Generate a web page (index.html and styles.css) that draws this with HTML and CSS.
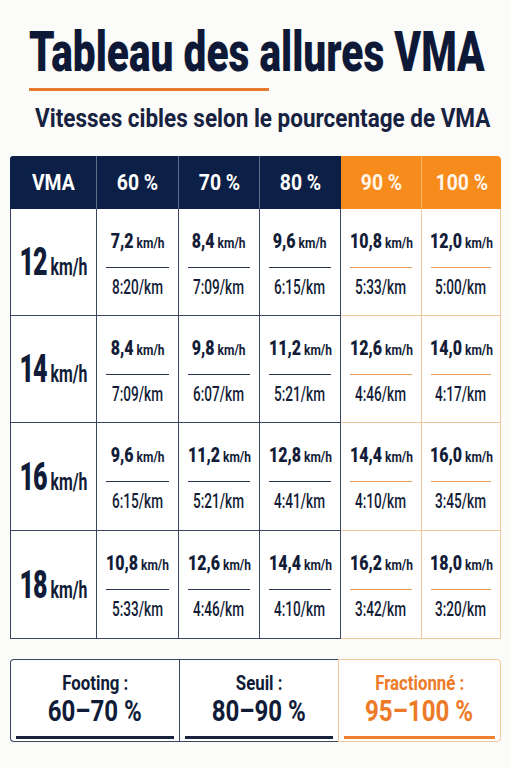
FILE: index.html
```html
<!DOCTYPE html>
<html lang="fr">
<head>
<meta charset="utf-8">
<link rel="stylesheet" href="styles.css">
</head>
<body>
<div class="page">
  <h1 class="title"><span class="sq-l">Tableau des allures VMA</span></h1>
  <div class="rule"></div>
  <p class="subtitle"><span class="sq-l sub">Vitesses cibles selon le pourcentage de VMA</span></p>

  <div class="table">
    <div class="th navy first"><span class="sq">VMA</span></div>
    <div class="th navy"><span class="sq">60 %</span></div>
    <div class="th navy"><span class="sq">70 %</span></div>
    <div class="th navy"><span class="sq">80 %</span></div>
    <div class="th orange"><span class="sq">90 %</span></div>
    <div class="th orange last"><span class="sq">100 %</span></div>

    <div class="rowh"><span class="sq rh"><b>12</b> km/h</span></div>
    <div class="cell n"><div class="sp"><span class="sq"><b>7,2</b> km/h</span></div><div class="pc"><span class="sq">8:20/km</span></div></div>
    <div class="cell n"><div class="sp"><span class="sq"><b>8,4</b> km/h</span></div><div class="pc"><span class="sq">7:09/km</span></div></div>
    <div class="cell n"><div class="sp"><span class="sq"><b>9,6</b> km/h</span></div><div class="pc"><span class="sq">6:15/km</span></div></div>
    <div class="cell o"><div class="sp"><span class="sq"><b>10,8</b> km/h</span></div><div class="pc"><span class="sq">5:33/km</span></div></div>
    <div class="cell o"><div class="sp"><span class="sq"><b>12,0</b> km/h</span></div><div class="pc"><span class="sq">5:00/km</span></div></div>

    <div class="rowh"><span class="sq rh"><b>14</b> km/h</span></div>
    <div class="cell n"><div class="sp"><span class="sq"><b>8,4</b> km/h</span></div><div class="pc"><span class="sq">7:09/km</span></div></div>
    <div class="cell n"><div class="sp"><span class="sq"><b>9,8</b> km/h</span></div><div class="pc"><span class="sq">6:07/km</span></div></div>
    <div class="cell n"><div class="sp"><span class="sq"><b>11,2</b> km/h</span></div><div class="pc"><span class="sq">5:21/km</span></div></div>
    <div class="cell o"><div class="sp"><span class="sq"><b>12,6</b> km/h</span></div><div class="pc"><span class="sq">4:46/km</span></div></div>
    <div class="cell o"><div class="sp"><span class="sq"><b>14,0</b> km/h</span></div><div class="pc"><span class="sq">4:17/km</span></div></div>

    <div class="rowh"><span class="sq rh"><b>16</b> km/h</span></div>
    <div class="cell n"><div class="sp"><span class="sq"><b>9,6</b> km/h</span></div><div class="pc"><span class="sq">6:15/km</span></div></div>
    <div class="cell n"><div class="sp"><span class="sq"><b>11,2</b> km/h</span></div><div class="pc"><span class="sq">5:21/km</span></div></div>
    <div class="cell n"><div class="sp"><span class="sq"><b>12,8</b> km/h</span></div><div class="pc"><span class="sq">4:41/km</span></div></div>
    <div class="cell o"><div class="sp"><span class="sq"><b>14,4</b> km/h</span></div><div class="pc"><span class="sq">4:10/km</span></div></div>
    <div class="cell o"><div class="sp"><span class="sq"><b>16,0</b> km/h</span></div><div class="pc"><span class="sq">3:45/km</span></div></div>

    <div class="rowh"><span class="sq rh"><b>18</b> km/h</span></div>
    <div class="cell n"><div class="sp"><span class="sq"><b>10,8</b> km/h</span></div><div class="pc"><span class="sq">5:33/km</span></div></div>
    <div class="cell n"><div class="sp"><span class="sq"><b>12,6</b> km/h</span></div><div class="pc"><span class="sq">4:46/km</span></div></div>
    <div class="cell n"><div class="sp"><span class="sq"><b>14,4</b> km/h</span></div><div class="pc"><span class="sq">4:10/km</span></div></div>
    <div class="cell o"><div class="sp"><span class="sq"><b>16,2</b> km/h</span></div><div class="pc"><span class="sq">3:42/km</span></div></div>
    <div class="cell o"><div class="sp"><span class="sq"><b>18,0</b> km/h</span></div><div class="pc"><span class="sq">3:20/km</span></div></div>
  </div>

  <div class="legend">
    <div class="lg navy-lg">
      <div class="lg-name"><span class="sq">Footing :</span></div>
      <div class="lg-val"><span class="sq">60–70 %</span></div>
    </div>
    <div class="lg navy-lg mid">
      <div class="lg-name"><span class="sq">Seuil :</span></div>
      <div class="lg-val"><span class="sq">80–90 %</span></div>
    </div>
    <div class="lg orange-lg">
      <div class="lg-name"><span class="sq">Fractionné :</span></div>
      <div class="lg-val"><span class="sq">95–100 %</span></div>
    </div>
  </div>
</div>
</body>
</html>
```

FILE: styles.css
```css
* { box-sizing: border-box; }
html, body { margin: 0; padding: 0; }
body {
  background: #fbfbfa;
  font-family: Roboto, "Liberation Sans", sans-serif;
  color: #111c38;
  width: 511px;
  height: 768px;
  overflow: hidden;
}
.page {
  padding: 0 10px;
  overflow: hidden;
}
.sq {
  display: inline-block;
  transform: scaleX(0.72);
  transform-origin: center;
  white-space: nowrap;
  flex: none;
}
.sq-l {
  display: inline-block;
  transform: scaleX(0.725);
  transform-origin: left center;
  white-space: nowrap;
}
.title {
  margin: 0;
  padding-top: 24px;
  padding-left: 19px;
  font-size: 56px;
  line-height: 56px;
  font-weight: 900;
  color: #0d1936;
  white-space: nowrap;
}
.rule {
  margin: 8px 0 0 19px;
  width: 240px;
  height: 3px;
  background: #e87a2e;
}
.subtitle {
  margin: 12px 0 0 25px;
  font-size: 26px;
  line-height: 30px;
  font-weight: 700;
  color: #17223f;
  white-space: nowrap;
  overflow: hidden;
}
.sub { transform: scaleX(0.865); }
.table {
  margin-top: 23px;
  display: grid;
  grid-template-columns: 87px 82px 81px 81px 81px 79px;
  grid-template-rows: 53px 107px 107px 108px 108px;
}
.th {
  display: flex;
  align-items: center;
  justify-content: center;
  font-size: 22px;
  font-weight: 700;
  color: #ffffff;
  border-right: 1px solid rgba(255,255,255,0.35);
}
.th .sq { transform: scaleX(0.88); }
.th.navy { background: #0c1f46; }
.th.orange { background: #f78b1c; color: #fff6ea; }
.th.navy:nth-child(4) { border-right: none; }
.th.first { border-radius: 3px 0 0 0; }
.th.last { border-radius: 0 4px 0 0; border-right: none; }
.rowh {
  display: flex;
  align-items: center;
  justify-content: center;
  background: #ffffff;
  border-left: 1px solid #3a4560;
  border-right: 1px solid #3a4560;
  border-bottom: 1px solid #3a4560;
  font-size: 24px;
  font-weight: 700;
  color: #111c38;
}
.rowh .rh { transform: scaleX(0.66); }
.rowh b { font-size: 38px; letter-spacing: -1.5px; }
.cell {
  background: #ffffff;
  display: flex;
  flex-direction: column;
  align-items: stretch;
  padding: 22px 9px 0;
  border-bottom: 1px solid #3a4560;
  border-right: 1px solid #3a4560;
}
.cell.o {
  border-right-color: #efc79a;
  border-bottom-color: #efc79a;
}
.sp {
  display: flex;
  justify-content: center;
  font-size: 15px;
  line-height: 20px;
  font-weight: 700;
  color: #141d38;
  padding-bottom: 14px;
  border-bottom: 1.5px solid #2b3552;
}
.sp .sq { transform: scaleX(0.8); }
.sp b { font-size: 20px; }
.cell.o .sp { border-bottom-color: #e99a55; }
.pc {
  display: flex;
  justify-content: center;
  margin-top: 9px;
  font-size: 20px;
  line-height: 20px;
  font-weight: 500;
  color: #141d38;
}
.pc .sq { transform: scaleX(0.68); }
.legend {
  margin-top: 20px;
  display: grid;
  grid-template-columns: 169px 159px 163px;
  height: 83px;
}
.lg {
  display: flex;
  flex-direction: column;
  align-items: center;
  padding: 11px 5px 0;
  background: #ffffff;
}
.lg::after {
  content: "";
  align-self: stretch;
  height: 2.5px;
  margin-top: 9px;
}
.navy-lg {
  border-top: 1.5px solid #3a4560;
  border-bottom: 1.5px solid #3a4560;
  color: #101b38;
}
.navy-lg::after { background: #17223f; }
.navy-lg:first-child {
  border-left: 1.5px solid #3a4560;
  border-radius: 4px 0 0 4px;
}
.mid { border-left: 1.5px solid #3a4560; }
.orange-lg {
  border: 1.5px solid #efc79a;
  border-radius: 0 4px 4px 0;
  color: #ec7a26;
}
.orange-lg::after { background: #ee8030; }
.lg-name, .lg-val {
  display: flex;
  justify-content: center;
  align-self: stretch;
}
.lg-name {
  font-size: 21px;
  font-weight: 700;
  line-height: 24px;
}
.lg-val {
  font-size: 29px;
  font-weight: 700;
  line-height: 32px;
}
.lg-name .sq { transform: scaleX(0.8); }
.lg-val .sq { transform: scaleX(0.83); }
```
